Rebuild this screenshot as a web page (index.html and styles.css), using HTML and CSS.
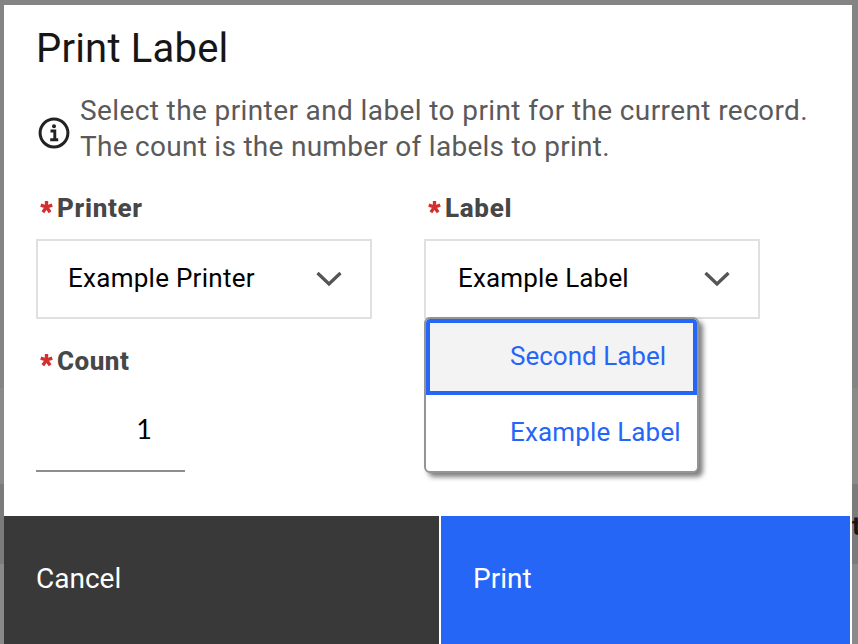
FILE: index.html
```html
<!DOCTYPE html>
<html lang="en">
<head>
<meta charset="utf-8">
<title>Print Label</title>
<link rel="stylesheet" href="styles.css">
</head>
<body>
<div class="page">
  <main class="dialog">
    <div class="content">
      <h1 class="title">Print Label</h1>
      <div class="info">
        <svg class="info-icon" viewBox="0 0 32 32" width="32" height="32">
          <circle cx="16" cy="16" r="13.9" fill="none" stroke="#222" stroke-width="3"/>
          <circle cx="16" cy="9.3" r="2" fill="#222"/>
          <path d="M12.500 14H16.8V22.8M12.2 22.8H20.2" fill="none" stroke="#222" stroke-width="2.9"/>
        </svg>
        <p class="info-text"><span class="line-one">Select the printer and label to print for the current record.</span><br><span class="line-two">The count is the number of labels to print.</span></p>
      </div>
      <div class="fields">
        <div class="field">
          <div class="label"><svg class="star" viewBox="0 0 14 14"><path d="M7 7V.5M7 7L.8 5M7 7L3.1 12.6M7 7L10.9 12.6M7 7L13.2 5"/></svg><span class="label-printer">Printer</span></div>
          <div class="select">
            <span class="value value-printer">Example Printer</span>
            <svg class="chevron" viewBox="0 0 26 16"><path d="M1.5 2L13 13L24.500 2"/></svg>
          </div>
        </div>
        <div class="field">
          <div class="label"><svg class="star" viewBox="0 0 14 14"><path d="M7 7V.5M7 7L.8 5M7 7L3.1 12.6M7 7L10.9 12.6M7 7L13.2 5"/></svg><span class="label-label">Label</span></div>
          <div class="select select-open">
            <span class="value value-label">Example Label</span>
            <svg class="chevron" viewBox="0 0 26 16"><path d="M1.5 2L13 13L24.500 2"/></svg>
            <div class="menu">
              <div class="option active"><span class="option-second">Second Label</span></div>
              <div class="option"><span class="value-label">Example Label</span></div>
            </div>
          </div>
        </div>
      </div>
      <div class="count">
        <div class="label"><svg class="star" viewBox="0 0 14 14"><path d="M7 7V.5M7 7L.8 5M7 7L3.1 12.6M7 7L10.9 12.6M7 7L13.2 5"/></svg><span class="label-count">Count</span></div>
        <div class="number">1</div>
      </div>
    </div>
    <div class="actions">
      <div class="button cancel"><span class="cancel-text">Cancel</span></div>
      <div class="button print"><span class="print-text">Print</span></div>
    </div>
  </main>
  <div class="behind">t</div>
</div>
</body>
</html>
```

FILE: styles.css
```css
* { box-sizing: border-box; }
body { margin: 0; font-family: Roboto, "Liberation Sans", sans-serif; }
.page {
  position: relative;
  width: 858px;
  height: 644px;
  overflow: hidden;
  padding: 5px 6px 0 4px;
  background: linear-gradient(#848484 388px, #8a8a88 388px, #8a8a88 484px, #7b7b7b 484px, #7b7b7b 564px, #8a8a8a 564px);
}
.dialog { height: 639px; display: flex; flex-direction: column; background: #fff; }
.content { height: 511px; padding: 20px 32px 0; }
.title { margin: 0; font-size: 40px; font-weight: 400; line-height: 48px; color: #161616; letter-spacing: .2px; }
.info { display: flex; align-items: center; margin-top: 20px; gap: 10px; height: 72px; padding-left: 2px; }
.info-icon { flex: none; margin-top: 7px; }
.info-text { margin: 0; font-size: 28px; font-weight: 400; line-height: 36px; color: #5a5a5a; white-space: nowrap; }
.line-one { letter-spacing: .39px; }
.line-two { letter-spacing: .28px; }
.fields { display: flex; gap: 52px; margin-top: 27px; }
.field { width: 336px; }
.label { display: flex; align-items: center; gap: 4px; height: 32px; padding-left: 4px; font-size: 26px; font-weight: 800; line-height: 32px; color: #474747; }
.label-printer { letter-spacing: .7px; }
.label-label { letter-spacing: .7px; }
.label-count { letter-spacing: .5px; }
.value-printer { letter-spacing: .27px; }
.value-label { letter-spacing: .17px; }
.star { width: 13px; height: 14px; margin-top: -2px; fill: none; stroke: #d32f2f; stroke-width: 3.6; }
.select { position: relative; display: flex; align-items: center; justify-content: space-between; height: 80px; margin-top: 15px; padding: 0 28px 2px 30px; border: 2px solid #e0e0e0; font-size: 26px; color: #000; }
.select-open { padding-left: 32px; }
.chevron { width: 26px; height: 16px; margin-top: 2px; fill: none; stroke: #555; stroke-width: 3.3; }
.menu { position: absolute; z-index: 1; left: -2px; top: 76px; width: 275px; height: 156px; border: 2px solid #949494; border-radius: 6px; background: #fff; box-shadow: 4px 4px 5px rgba(0,0,0,.5); overflow: hidden; }
.option { height: 76px; padding-left: 84px; line-height: 74px; color: #2666f7; white-space: nowrap; }
.active { padding-left: 80px; line-height: 66px; border: 4px solid #2666f7; background: #f3f3f3; }
.count { margin-top: 26px; }
.number { width: 149px; height: 96px; margin-top: -1px; padding-right: 33px; border-bottom: 2px solid #8d8d8d; font-family: Lato, sans-serif; font-size: 27px; line-height: 106px; text-align: right; color: #000; }
.actions { display: flex; height: 128px; gap: 2px; padding-right: 2px; }
.button { padding: 45px 32px; font-size: 28px; line-height: 36px; color: #fff; }
.cancel { width: 435px; background: #393939; }
.print { flex: 1; background: #2666f7; }
.behind { position: absolute; left: 852px; top: 510px; font-size: 26px; font-weight: 700; line-height: 32px; color: #161616; }
```
